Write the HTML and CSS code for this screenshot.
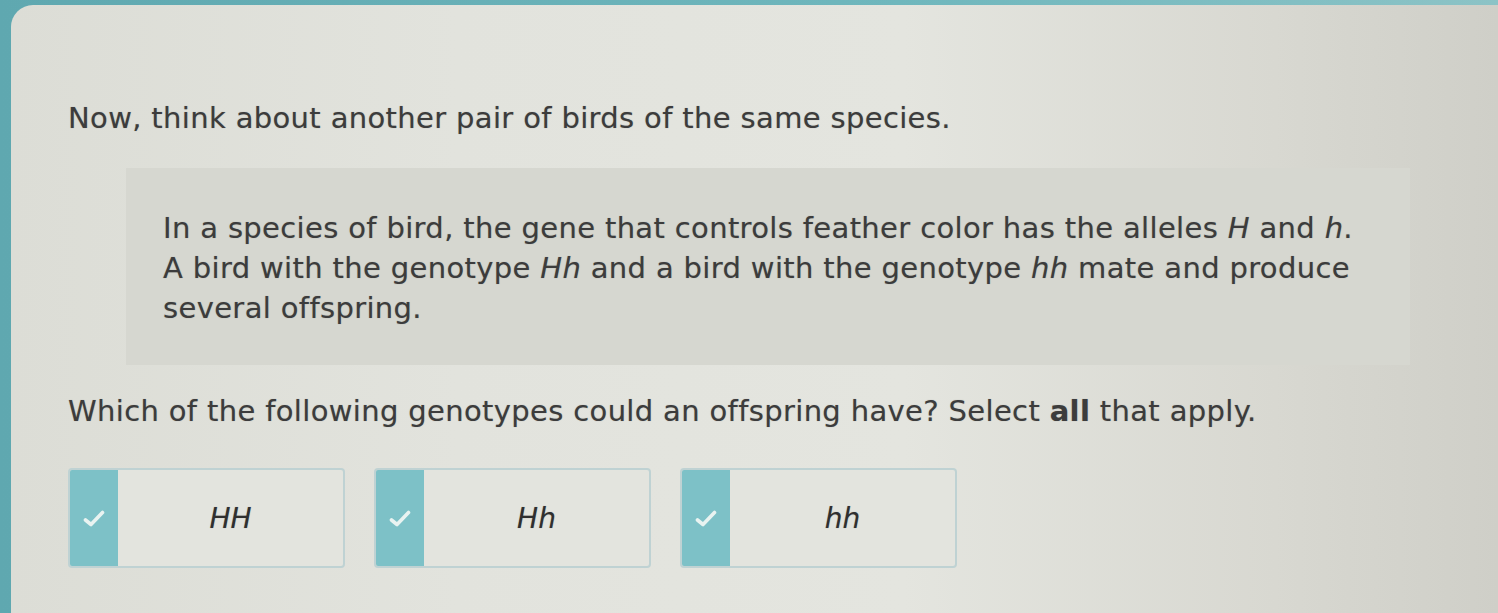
FILE: index.html
```html
<!DOCTYPE html>
<html lang="en">
<head>
    <meta charset="UTF-8">
    <title>Genotypes question</title>
    <link rel="stylesheet" href="styles.css">
</head>
<body>
    <div class="card">
        <p class="lead">Now, think about another pair of birds of the same species.</p>

        <div class="scenario">
            <p>In a species of bird, the gene that controls feather color has the alleles <i>H</i> and <i>h</i>.<br>
            A bird with the genotype <i>Hh</i> and a bird with the genotype <i>hh</i> mate and produce<br>
            several offspring.</p>
        </div>

        <p class="question">Which of the following genotypes could an offspring have? Select <b>all</b> that apply.</p>

        <div class="choices">
            <div class="choice">
                <span class="box"><svg width="22" height="17" viewBox="0 0 22 17"><path d="M2.5 10 L8 14.5 L19.5 2.5" fill="none" stroke="#e9f3f1" stroke-width="3.6" stroke-linecap="round" stroke-linejoin="round"/></svg></span>
                <span class="label">HH</span>
            </div>
            <div class="choice">
                <span class="box"><svg width="22" height="17" viewBox="0 0 22 17"><path d="M2.5 10 L8 14.5 L19.5 2.5" fill="none" stroke="#e9f3f1" stroke-width="3.6" stroke-linecap="round" stroke-linejoin="round"/></svg></span>
                <span class="label">Hh</span>
            </div>
            <div class="choice">
                <span class="box"><svg width="22" height="17" viewBox="0 0 22 17"><path d="M2.5 10 L8 14.5 L19.5 2.5" fill="none" stroke="#e9f3f1" stroke-width="3.6" stroke-linecap="round" stroke-linejoin="round"/></svg></span>
                <span class="label">hh</span>
            </div>
        </div>
    </div>
</body>
</html>
```

FILE: styles.css
```css
html, body {
    height: 100%;
}
body {
    margin: 0;
    background: linear-gradient(90deg, #5fa8b0 0%, #6fb7bd 60%, #8cc3c6 100%);
    padding: 5px 0 0 11px;
    box-sizing: border-box;
    font-family: "DejaVu Sans", Verdana, sans-serif;
    color: #3c3c3c;
    text-shadow: 0 0 1px rgba(40, 40, 40, 0.35);
    overflow: hidden;
}
.card {
    height: 100%;
    border-radius: 22px 0 0 0;
    background: linear-gradient(90deg, #dcddd6 0%, #e2e3dd 30%, #e4e5df 60%, #d8d8d1 85%, #cfcfc8 100%);
    padding: 93px 0 0 57px;
    box-sizing: border-box;
}
.lead, .scenario p, .question {
    font-size: 29px;
    line-height: 40px;
    letter-spacing: 0.35px;
}
.lead {
    margin: 0;
}
.scenario {
    margin: 30px 0 0 58px;
    width: 1284px;
    height: 197px;
    box-sizing: border-box;
    background: #d6d7d0;
    padding: 40px 0 0 37px;
}
.scenario p {
    margin: 0;
}
.question {
    margin: 26px 0 0 0;
}
.choices {
    display: flex;
    gap: 29px;
    margin-top: 37px;
}
.choice {
    display: flex;
    width: 277px;
    height: 100px;
    box-sizing: border-box;
    border: 2px solid #bfd2d3;
    border-radius: 4px;
    background: #e3e4de;
    overflow: hidden;
}
.box {
    width: 48px;
    background: #7dc1c7;
    display: flex;
    align-items: center;
    justify-content: center;
}
.label {
    flex: 1;
    display: flex;
    align-items: center;
    justify-content: center;
    font-style: italic;
    font-size: 28px;
    color: #2f2f2f;
}
```
